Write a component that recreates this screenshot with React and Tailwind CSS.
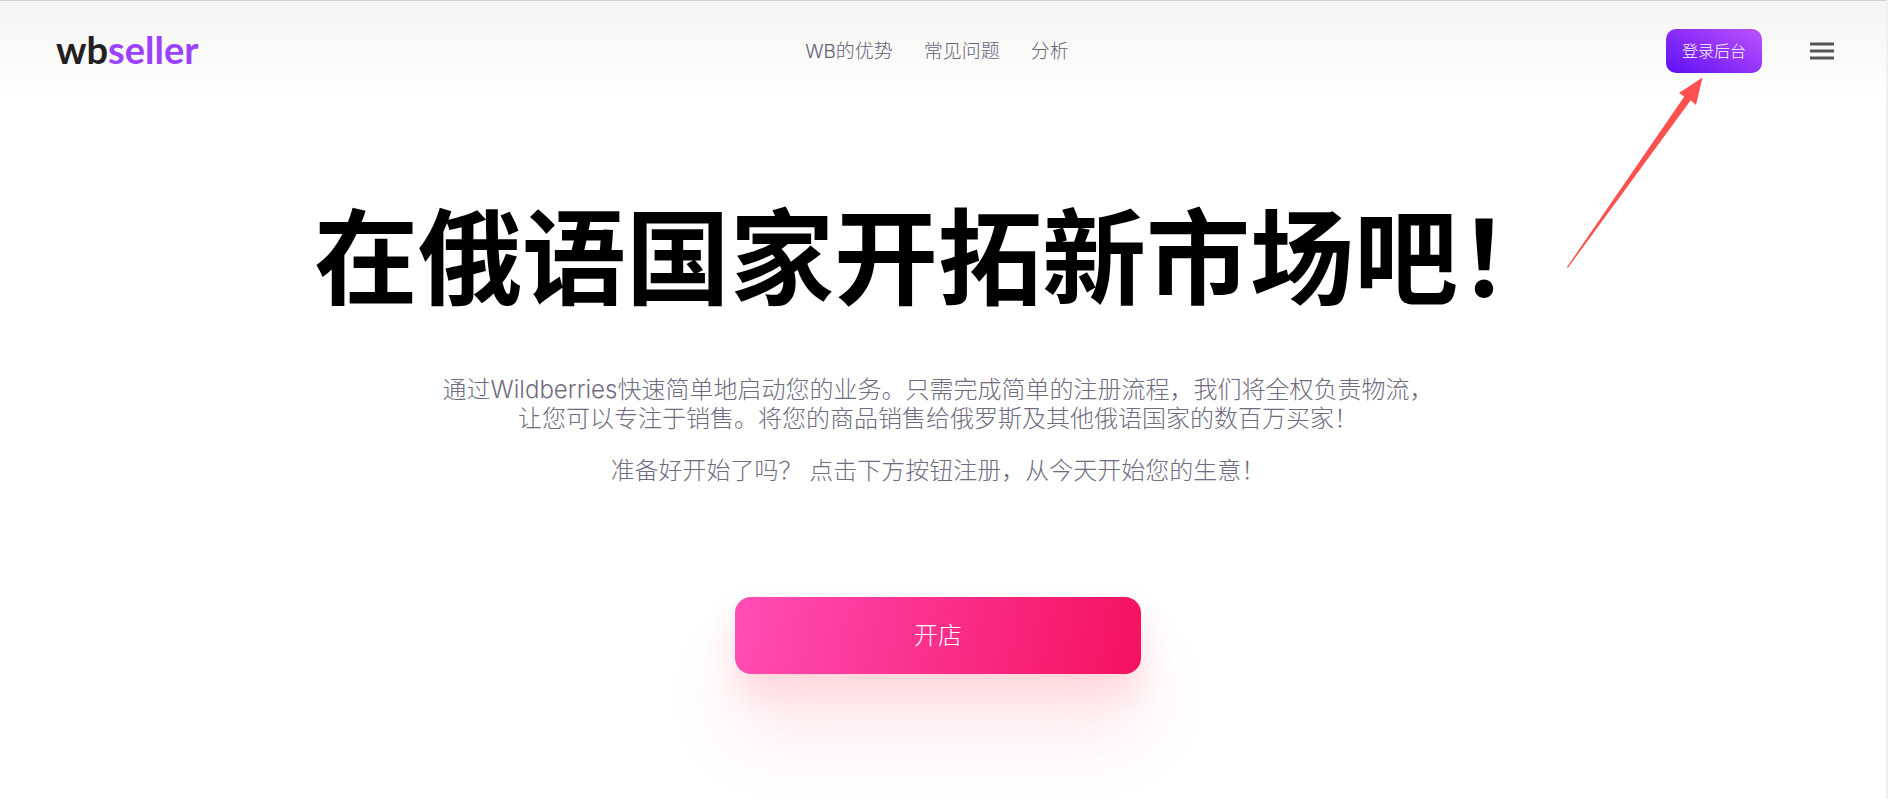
import React from 'react'

const navLinks = [
  { label: 'WB的优势', href: '#advantages' },
  { label: '常见问题', href: '#faq' },
  { label: '分析', href: '#analytics' },
]

const Logo = () => (
  <a
    href="#home"
    className="pb-1 font-['Lato','Noto_Sans_CJK_SC',sans-serif] text-[38px] leading-10 font-bold text-[#241f21]"
  >
    wb<span className="text-[#9b41ff]">seller</span>
  </a>
)

const Pointer = () => (
  <svg
    className="pointer-events-none absolute top-full right-[59px] mt-1"
    width="136"
    height="192"
    viewBox="0 0 136 192"
    fill="#fd5150"
    aria-hidden="true"
  >
    <path d="M135.5 .5 129 28 123.7 23.3 .8 191 0 190 117.3 19.6 112 16Z" />
  </svg>
)

const MenuButton = () => (
  <button type="button" aria-label="菜单" className="flex size-12 items-center justify-center">
    <svg width="24" height="18" viewBox="0 0 24 18" fill="#555356" aria-hidden="true">
      <path d="M0 .5h24v3H0zM0 7.5h24v3H0zM0 14.5h24v3H0z" />
    </svg>
  </button>
)

const Header = () => (
  <header className="grid h-[100px] grid-cols-[1fr_auto_1fr] items-center border-t border-[#cfcfcf] bg-linear-to-b from-[#f4f4f2] to-white pr-10 pl-14">
    <Logo />
    <nav className="flex gap-[31px] pt-1 pr-7">
      {navLinks.map((link) => (
        <a key={link.href} href={link.href} className="text-[19px] font-light text-[#666175]">
          {link.label}
        </a>
      ))}
    </nav>
    <div className="flex items-center justify-end gap-9">
      <div className="relative">
        <button
          type="button"
          className="h-11 rounded-[10px] bg-linear-[30deg] from-[#5b10f5] via-[#8f30f8] to-[#bd52ff] px-4 text-base font-light text-white"
        >
          登录后台
        </button>
        <Pointer />
      </div>
      <MenuButton />
    </div>
  </header>
)

const Hero = () => (
  <main className="flex flex-col items-center pt-[87px] pb-12 text-center">
    <h1 className="text-[104px] leading-[144px] font-bold text-black">在俄语国家开拓新市场吧！</h1>
    <div className="mt-11 text-2xl leading-[29px] font-light text-[#706b7f]">
      <p>
        通过Wildberries快速简单地启动您的业务。只需完成简单的注册流程，我们将全权负责物流，
        <br />
        让您可以专注于销售。将您的商品销售给俄罗斯及其他俄语国家的数百万买家！
      </p>
      <p className="mt-[23px]">准备好开始了吗？ 点击下方按钮注册，从今天开始您的生意！</p>
    </div>
    <button
      type="button"
      className="mt-28 h-[77px] w-[406px] rounded-2xl bg-linear-[100deg] from-[#ff4db5] to-[#f5115f] text-2xl font-light text-white shadow-[0_16px_32px_rgba(255,50,80,0.14),0_60px_72px_rgba(255,50,80,0.12)]"
    >
      开店
    </button>
  </main>
)

export default function App() {
  return (
    <div className="min-h-screen overflow-hidden border-r-2 border-[#f0f0f0] bg-white font-['Inter','Noto_Sans_CJK_SC',sans-serif]">
      <Header />
      <div className="pr-2.5">
        <Hero />
      </div>
    </div>
  )
}
